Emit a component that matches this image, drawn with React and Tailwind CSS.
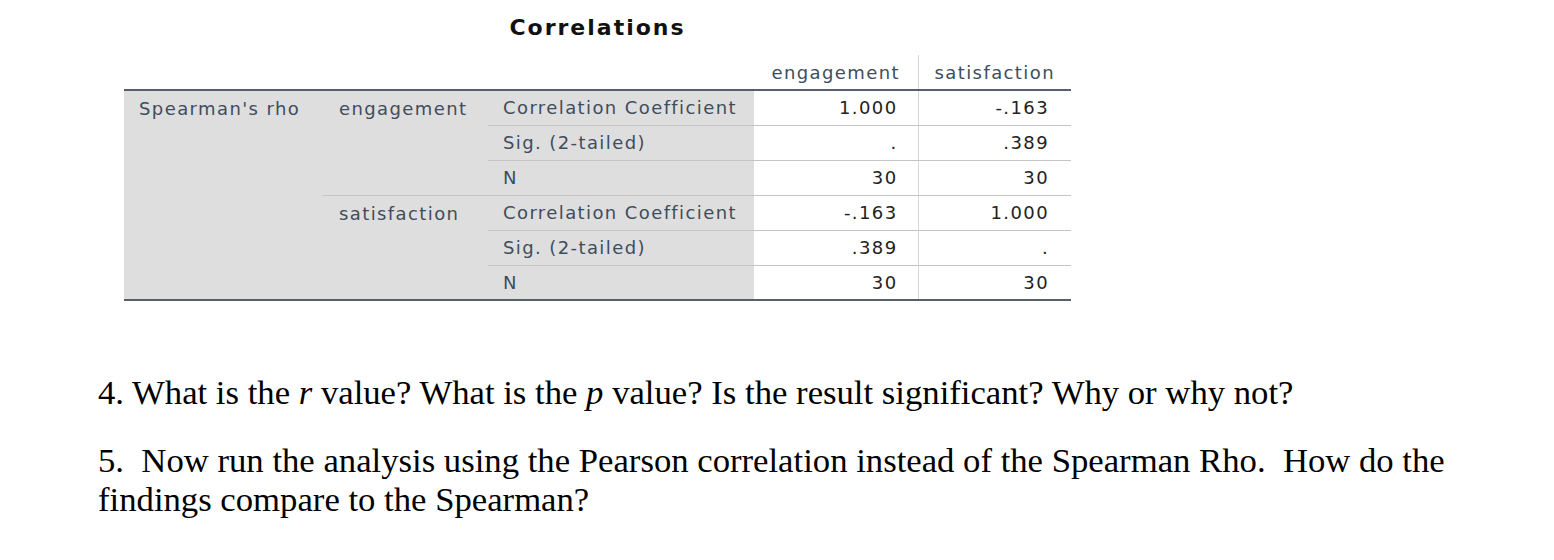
import React from "react";

const rows = [
  { group: "engagement", stat: "Correlation Coefficient", a: "1.000", b: "-.163" },
  { group: null, stat: "Sig. (2-tailed)", a: ".", b: ".389" },
  { group: null, stat: "N", a: "30", b: "30" },
  { group: "satisfaction", stat: "Correlation Coefficient", a: "-.163", b: "1.000" },
  { group: null, stat: "Sig. (2-tailed)", a: ".389", b: "." },
  { group: null, stat: "N", a: "30", b: "30" },
];

export default function App() {
  return (
    <div className="w-[1554px] h-[560px] bg-white relative overflow-hidden">
      <div className="pl-[124px] pt-[13px]">
        <div className="w-[947px] text-center text-[22px] tracking-[2px] font-bold text-[#111] leading-[30px] font-['DejaVu_Sans',sans-serif]">
          Correlations
        </div>
        <table className="w-[947px] mt-[12px] border-collapse font-['DejaVu_Sans',sans-serif] text-[18px] leading-[21px] tracking-[1.4px] table-fixed">
          <colgroup>
            <col className="w-[199px]" />
            <col className="w-[165px]" />
            <col className="w-[266px]" />
            <col className="w-[164px]" />
            <col className="w-[153px]" />
          </colgroup>
          <thead>
            <tr className="h-[35px]">
              <th colSpan={3} className="border-b-2 border-[#56606c]"></th>
              <th className="border-b-2 border-[#56606c] border-r border-r-[#d6d6d6] text-center font-normal text-[#3e4d5c]">engagement</th>
              <th className="border-b-2 border-[#56606c] text-center font-normal text-[#3e4d5c]">satisfaction</th>
            </tr>
          </thead>
          <tbody className="border-b-2 border-[#56606c]">
            {rows.map((r, i) => {
              const last = i === rows.length - 1;
              const line = last ? "" : "border-b border-[#c4c4c4]";
              return (
                <tr key={i} className="h-[35px]">
                  {i === 0 && (
                    <td rowSpan={6} className="bg-[#dedede] align-top pt-[7px] pl-[15px] text-[#3e4d5c] whitespace-nowrap">Spearman's rho</td>
                  )}
                  {r.group && (
                    <td rowSpan={3} className={"bg-[#dedede] align-top pt-[7px] pl-[16px] text-[#3e4d5c] whitespace-nowrap " + (i === 0 ? "border-b border-[#c4c4c4]" : "")}>{r.group}</td>
                  )}
                  <td className={"bg-[#dedede] pl-[15px] text-[#3e4d5c] whitespace-nowrap " + line}>{r.stat}</td>
                  <td className={"text-right pr-[20px] text-[#222] border-r border-r-[#d6d6d6] " + line}>{r.a}</td>
                  <td className={"text-right pr-[22px] text-[#222] " + line}>{r.b}</td>
                </tr>
              );
            })}
          </tbody>
        </table>
      </div>
      <div className="pl-[98px] pt-[72px] pr-[94px] font-['Liberation_Serif',serif] text-[34.7px] text-black leading-[39px]">
        <p>4. What is the <i>r</i> value? What is the <i>p</i> value? Is the result significant? Why or why not?</p>
        <p className="mt-[29px]">5.&nbsp; Now run the analysis using the Pearson correlation instead of the Spearman Rho.&nbsp; How do the findings compare to the Spearman?</p>
      </div>
    </div>
  );
}
